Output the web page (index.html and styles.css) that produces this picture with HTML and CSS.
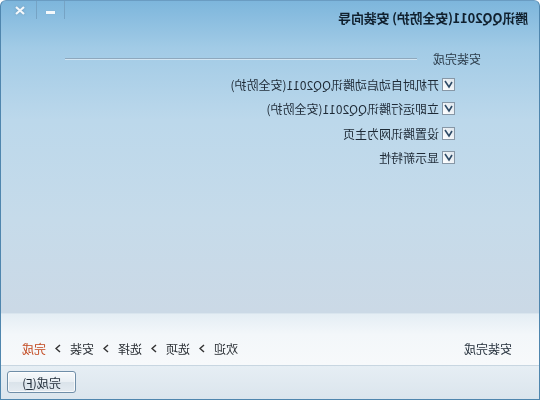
FILE: index.html
```html
<!DOCTYPE html>
<html lang="zh-CN">
<head>
    <meta charset="UTF-8">
    <title>腾讯QQ2011(安全防护) 安装向导</title>
    <link rel="stylesheet" href="styles.css">
</head>
<body>
    <!-- снимок зеркальный, поэтому всё окно отражено по горизонтали -->
    <div class="mirror">
        <div class="window">
            <div class="titlebar">
                <span class="title">腾讯QQ2011(安全防护) 安装向导</span>
                <div class="caption">
                    <span class="cap-btn cap-min"><i></i></span>
                    <span class="cap-btn cap-close">
                        <svg width="10" height="9" viewBox="0 0 10 9"><path d="M1 1 L9 8 M9 1 L1 8" stroke="#f4f8fb" stroke-width="2.2"/></svg>
                    </span>
                </div>
            </div>

            <div class="main">
                <div class="section-head">
                    <span>安装完成</span>
                    <div class="rule"></div>
                </div>
                <ul class="options">
                    <li><span class="check"><svg width="9" height="9" viewBox="0 0 9 9"><path d="M1 2 L4 7 L8 1" fill="none" stroke="#2d4a66" stroke-width="1.6"/></svg></span>开机时自动启动腾讯QQ2011(安全防护)</li>
                    <li><span class="check"><svg width="9" height="9" viewBox="0 0 9 9"><path d="M1 2 L4 7 L8 1" fill="none" stroke="#2d4a66" stroke-width="1.6"/></svg></span>立即运行腾讯QQ2011(安全防护)</li>
                    <li><span class="check"><svg width="9" height="9" viewBox="0 0 9 9"><path d="M1 2 L4 7 L8 1" fill="none" stroke="#2d4a66" stroke-width="1.6"/></svg></span>设置腾讯网为主页</li>
                    <li><span class="check"><svg width="9" height="9" viewBox="0 0 9 9"><path d="M1 2 L4 7 L8 1" fill="none" stroke="#2d4a66" stroke-width="1.6"/></svg></span>显示新特性</li>
                </ul>
            </div>

            <div class="steps-bar">
                <span class="status">安装完成</span>
                <div class="steps">
                    <span>欢迎</span>
                    <svg class="chev" width="6" height="9" viewBox="0 0 6 9"><path d="M1 1 L5 4.5 L1 8" fill="none" stroke="#333" stroke-width="1.5"/></svg>
                    <span>选项</span>
                    <svg class="chev" width="6" height="9" viewBox="0 0 6 9"><path d="M1 1 L5 4.5 L1 8" fill="none" stroke="#333" stroke-width="1.5"/></svg>
                    <span>选择</span>
                    <svg class="chev" width="6" height="9" viewBox="0 0 6 9"><path d="M1 1 L5 4.5 L1 8" fill="none" stroke="#333" stroke-width="1.5"/></svg>
                    <span>安装</span>
                    <svg class="chev" width="6" height="9" viewBox="0 0 6 9"><path d="M1 1 L5 4.5 L1 8" fill="none" stroke="#333" stroke-width="1.5"/></svg>
                    <span class="current">完成</span>
                </div>
            </div>

            <div class="actions">
                <button class="btn">完成(<u>F</u>)</button>
            </div>
        </div>
    </div>
</body>
</html>
```

FILE: styles.css
```css
body {
    margin: 0;
    font-family: "Noto Sans CJK SC", "Noto Sans", sans-serif;
    font-size: 12px;
    color: #1e2a36;
}

.mirror {
    width: 540px;
    height: 400px;
    transform: scaleX(-1);
}

.window {
    box-sizing: border-box;
    width: 540px;
    height: 400px;
    display: flex;
    flex-direction: column;
    border: 1px solid #4f86ae;
    border-top-color: #6a9cc2;
    border-radius: 6px 6px 0 0;
    background: linear-gradient(180deg, #7db6dc 0%, #a2cbe6 12%, #bcd8eb 30%, #c6dbea 55%, #cbd9e6 78%);
    overflow: hidden;
}

/* Заголовок окна */
.titlebar {
    height: 30px;
    flex: none;
    display: flex;
    align-items: flex-start;
    justify-content: space-between;
    padding-left: 11px;
}

.title {
    margin-top: 7px;
    font-size: 13px;
    font-weight: 700;
    color: #10202e;
    letter-spacing: -0.2px;
}

.caption {
    display: flex;
    margin-right: 3px;
    height: 18px;
    border-left: 1px solid #76a3c4;
}

.cap-btn {
    width: 27px;
    height: 18px;
    display: flex;
    align-items: center;
    justify-content: center;
    border-right: 1px solid #76a3c4;
}

.cap-close {
    width: 32px;
    border-right: none;
}

.cap-min i {
    display: block;
    width: 9px;
    height: 3px;
    margin-top: 4px;
    background: #f4f8fb;
    box-shadow: 0 0 1px #6d97b6;
}

.cap-close svg {
    filter: drop-shadow(0 0 1px #6d97b6);
}

/* Основная часть */
.main {
    flex: 1;
    padding: 19px 0 0 58px;
}

.section-head {
    display: flex;
    align-items: center;
    gap: 16px;
    height: 16px;
    color: #2a3a48;
}

.rule {
    width: 352px;
    height: 1px;
    background: #8ea8bd;
    box-shadow: 0 1px 0 rgba(255,255,255,0.5);
}

.options {
    list-style: none;
    margin: 6px 0 0;
    padding: 0 0 0 26px;
}

.options li {
    height: 24.5px;
    display: flex;
    align-items: center;
    gap: 3px;
    color: #1e2a36;
}

.check {
    box-sizing: border-box;
    width: 13px;
    height: 13px;
    display: flex;
    align-items: center;
    justify-content: center;
    border: 1px solid #8797a6;
    background: linear-gradient(135deg, #dde5ec, #ffffff);
}

/* Шаги установки */
.steps-bar {
    height: 52px;
    flex: none;
    display: flex;
    align-items: flex-end;
    justify-content: space-between;
    padding: 0 21px 8px 27px;
    box-sizing: border-box;
    background: linear-gradient(180deg, #e4edf4 0%, #f3f7fa 40%, #f7f9fb 100%);
    border-top: 1px solid #d9e5ee;
}

.status {
    color: #1e2a36;
}

.steps {
    display: flex;
    align-items: center;
    gap: 9px;
    color: #2a2f35;
}

.steps .current {
    color: #c2481f;
}

/* Кнопки */
.actions {
    height: 34px;
    flex: none;
    display: flex;
    justify-content: flex-end;
    align-items: flex-start;
    padding: 5px 6px 0 0;
    box-sizing: border-box;
    border-top: 1px solid #c8d6e1;
    background: linear-gradient(180deg, #e6eef4, #dbe5ed);
}

.btn {
    width: 69px;
    height: 22px;
    padding: 0;
    font-family: inherit;
    font-size: 12px;
    color: #1e2a36;
    border: 1px solid #6f8ea8;
    border-radius: 3px;
    background: linear-gradient(180deg, #f6f9fb 0%, #e9eff4 50%, #dae3ea 51%, #e4ebf1 100%);
    box-shadow: inset 0 0 0 1px rgba(255,255,255,0.7);
}

.btn u {
    text-decoration: underline;
}
```
